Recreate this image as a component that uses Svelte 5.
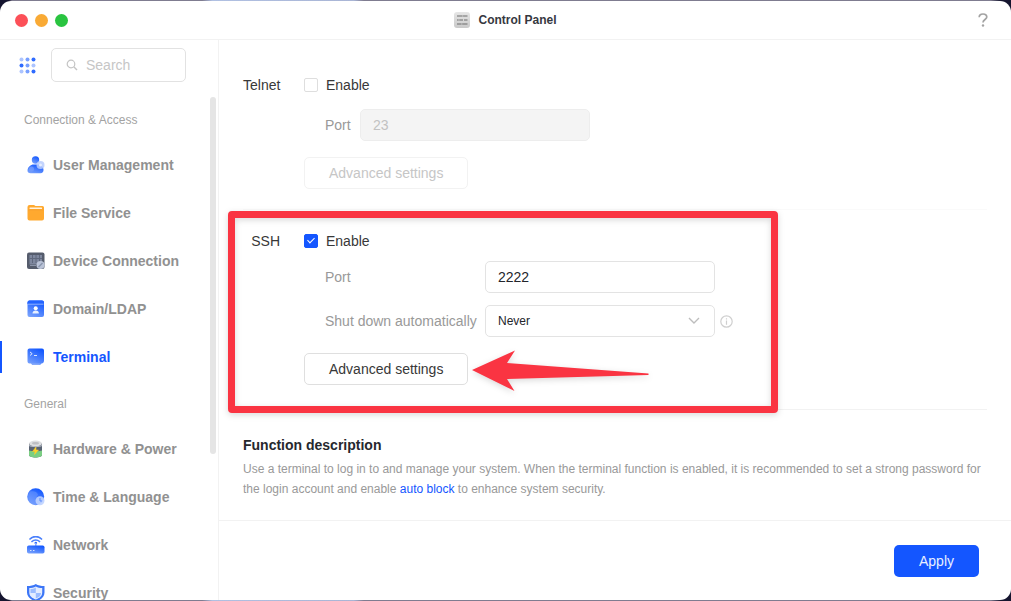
<script>
  const groups = [
    {
      title: 'Connection & Access',
      items: [
        { id: 'user', label: 'User Management' },
        { id: 'file', label: 'File Service' },
        { id: 'device', label: 'Device Connection' },
        { id: 'domain', label: 'Domain/LDAP' },
        { id: 'terminal', label: 'Terminal' }
      ]
    },
    {
      title: 'General',
      items: [
        { id: 'hardware', label: 'Hardware & Power' },
        { id: 'time', label: 'Time & Language' },
        { id: 'network', label: 'Network' },
        { id: 'security', label: 'Security' }
      ]
    }
  ];

  let active = $state('terminal');
  let search = $state('');
  let telnetEnabled = $state(false);
  let telnetPort = $state('23');
  let sshEnabled = $state(true);
  let sshPort = $state('2222');
  let shutdown = $state('never');
</script>

<svelte:head>
  <title>Control Panel</title>
</svelte:head>

{#snippet icon(id)}
  <svg class="icon" viewBox="0 0 18 18" aria-hidden="true">
    {#if id === 'user'}
      <circle cx="8.5" cy="4" r="3.7" fill="url(#blue)" />
      <path d="M0.500 14.5C0.500 11 4 8.500 6.5 8.500h4.500c3 0 5.500 2.500 5.500 5.500 0 2-1 3.200-3 3.200H3.500c-2 0-3-1-3-2.700z" fill="url(#blue)" />
      <circle cx="13.500" cy="9" r="4" fill="#b9cdfd" opacity="0.85" />
      <circle cx="13.500" cy="9" r="1.500" fill="#e6eeff" />
      <circle cx="4.500" cy="13" r="2.500" fill="#7fa4fb" opacity="0.6" />
    {:else if id === 'file'}
      <path d="M0.500 3a2 2 0 0 1 2-2H7l1.500 1h7a1.500 1.500 0 0 1 1.500 1.500v11a2 2 0 0 1-2 2H2.500a2 2 0 0 1-2-2z" fill="#ffa92f" />
      <rect x="2.500" y="3.500" width="12.500" height="1.500" rx="0.500" fill="#fff3e0" />
      <path d="M1 5.500h15.500v1H1z" fill="#f59b2b" opacity="0.5" />
    {:else if id === 'device'}
      <rect x="0" y="0.500" width="17.500" height="16.500" rx="2" fill="#555c6c" />
      <rect x="2.500" y="3" width="12.500" height="9.500" fill="#7e879e" />
      <path d="M5.500 3v8M9 3v8M12.500 3v8M2.500 6.500H15" stroke="#5f687d" stroke-width="1" />
      <path d="M3 13.500h6" stroke="#8c95aa" stroke-width="1" />
      <circle cx="13.500" cy="13" r="4" fill="#bac3d7" />
      <path d="M11.500 15l4-4" stroke="#8994ac" stroke-width="1.500" />
    {:else if id === 'domain'}
      <rect x="0.500" y="0.500" width="16.500" height="16.500" rx="2" fill="url(#blue)" />
      <path d="M0.500 4V2.500a2 2 0 0 1 2-2H15a2 2 0 0 1 2 2V4z" fill="#2464ff" />
      <path d="M1 4.200h15.500" stroke="#8db0ff" stroke-width="1" />
      <circle cx="8.700" cy="8.300" r="2" fill="#fff" />
      <path d="M5.500 13.500c0-2 1.200-3 3.200-3s3.200 1 3.200 3z" fill="#e8f0ff" />
    {:else if id === 'terminal'}
      <path d="M0.500 2.500a2 2 0 0 1 2-2H15a2 2 0 0 1 2 2v10c0 2-1 3-2.500 3L13 17H5.500L4 15.500H2.500a2 2 0 0 1-2-2z" fill="url(#blue)" />
      <path d="M3 4l2.200 1.700L3 7.500M7 7.500h3" stroke="#dce8ff" stroke-width="1" fill="none" />
      <path d="M4 15.500h9.500L12.500 17H5.500z" fill="#86aafa" />
    {:else if id === 'hardware'}
      <path d="M2 3h13v12c0 1.500-3 2.500-6.500 2.500S2 16.500 2 15z" fill="#596373" />
      <path d="M2 10.500c2 1 11 1 13 0V15c0 1.500-3 2.500-6.500 2.500S2 16.500 2 15z" fill="#7bcf82" />
      <ellipse cx="8.500" cy="3.500" rx="6.500" ry="3" fill="#dedfe1" />
      <ellipse cx="8.500" cy="3.300" rx="3.500" ry="1.200" fill="#bcbec2" />
      <path d="M2 5c2 1.500 11 1.500 13 0v1c-2 1.500-11 1.500-13 0z" fill="#b9bfc9" />
      <path d="M9 7l-3.500 4.500H8L7.500 14.500l4-4.500H9z" fill="#ffd028" stroke="#ffd028" stroke-width="0.500" />
    {:else if id === 'time'}
      <circle cx="8.700" cy="8.800" r="8.500" fill="url(#blue)" />
      <path d="M3 3.500c4-1 7 0 8 3-1 3-3 3-2 6 1 2 1 3 0 4.500A8.500 8.500 0 0 1 3 3.500z" fill="#76a0ff" opacity="0.45" />
      <circle cx="13" cy="12.800" r="4.500" fill="#bfd3ff" opacity="0.9" />
      <path d="M13 10v3h2" stroke="#5d8dfb" stroke-width="1" fill="none" />
    {:else if id === 'network'}
      <path d="M3 3c3-3.200 8.500-3.200 11.500 0M5 5.500c2-2 5.500-2 7.500 0" stroke="#4b80fb" stroke-width="1.700" fill="none" stroke-linecap="round" />
      <circle cx="8.800" cy="7" r="1.300" fill="#2d6bff" />
      <path d="M8.800 7v4" stroke="#8cafff" stroke-width="1.500" />
      <rect x="0" y="9.500" width="17.500" height="8" rx="1.800" fill="url(#blue)" />
      <path d="M3 14.500h1.500M6 14.500h1.500" stroke="#d4e2ff" stroke-width="1.200" />
    {:else}
      <path d="M8.800 0C11 1.500 14 2 17.500 2v6.500c0 4.500-3.500 7.500-8.700 9C4 16 0 13 0 8.500V2c3.500 0 6.500-0.500 8.800-2z" fill="#3c76f7" />
      <path d="M8.800 2.500c2 1 4.200 1.500 6.400 1.600v4.400c0 3.500-2.700 5.700-6.400 7-3.700-1.300-6.500-3.500-6.500-7V4.100c2.200-.1 4.500-.6 6.500-1.600z" fill="#e4edff" />
      <path d="M8.800 3.500v5.500H14c0 2.700-2 4.500-5.200 5.500V9H3.500V5c2 0 3.700-.5 5.300-1.500z" fill="#9bbcff" />
    {/if}
  </svg>
{/snippet}

<div class="desktop">
  <svg class="defs" aria-hidden="true">
    <linearGradient id="blue" x1="0.7" y1="0" x2="0.2" y2="1">
      <stop offset="0" stop-color="#1257ff" />
      <stop offset="1" stop-color="#79a2fc" />
    </linearGradient>
    <linearGradient id="metal" x1="0" y1="0" x2="0" y2="1">
      <stop offset="0" stop-color="#e6e6e6" />
      <stop offset="1" stop-color="#c9c9c9" />
    </linearGradient>
  </svg>

  <div class="window">
    <header class="titlebar">
      <div class="lights">
        <button type="button" class="light light--close" aria-label="Close"></button>
        <button type="button" class="light light--min" aria-label="Minimize"></button>
        <button type="button" class="light light--max" aria-label="Maximize"></button>
      </div>
      <h1>
        <svg class="app-icon" viewBox="0 0 16 16" aria-hidden="true">
          <rect width="16" height="16" rx="3" fill="url(#metal)" />
          <path d="M3 4h5.500M10 4h3.500M3 8h1.500M6 8h3M10 8h3.500M3 12h4.500M9 12h4.500" stroke="#6c6c6c" stroke-width="1.200" />
          <path d="M9.300 3v2M5.200 7v2M8.300 11v2" stroke="#9a9a9a" stroke-width="1" />
        </svg>
        Control Panel
      </h1>
      <button type="button" class="help" aria-label="Help">
        <svg viewBox="0 0 10 14" aria-hidden="true">
          <path d="M1.200 4.200C1.200 2 2.800 1 5 1s3.800 1.100 3.800 3c0 2.400-3.800 2.700-3.800 5.500" stroke="#a3a3a3" stroke-width="1.700" fill="none" />
          <circle cx="5" cy="12.500" r="1.200" fill="#a3a3a3" />
        </svg>
      </button>
    </header>

    <div class="body">
      <aside class="sidebar">
        <div class="sidebar__head">
          <button type="button" class="apps" aria-label="All settings">
            <svg viewBox="0 0 17 17" aria-hidden="true">
              <g fill="#2f6bff">
                <circle cx="2.500" cy="2.500" r="2" opacity="0.4" />
                <circle cx="8.500" cy="2.500" r="2" opacity="0.65" />
                <circle cx="14.500" cy="2.500" r="2" />
                <circle cx="2.500" cy="8.500" r="2" />
                <circle cx="8.500" cy="8.500" r="2" opacity="0.65" />
                <circle cx="14.500" cy="8.500" r="2" opacity="0.4" />
                <circle cx="2.500" cy="14.500" r="2" opacity="0.4" />
                <circle cx="8.500" cy="14.500" r="2" opacity="0.65" />
                <circle cx="14.500" cy="14.500" r="2" />
              </g>
            </svg>
          </button>
          <label class="search">
            <svg viewBox="0 0 12 12" aria-hidden="true">
              <circle cx="5" cy="5" r="3.800" fill="none" stroke="#c4c4c4" stroke-width="1.200" />
              <path d="M7.800 7.800L11 11" stroke="#c4c4c4" stroke-width="1.400" />
            </svg>
            <input type="text" placeholder="Search" aria-label="Search" bind:value={search} />
          </label>
        </div>

        <nav class="nav">
          {#each groups as group}
            <h2>{group.title}</h2>
            <ul>
              {#each group.items as item}
                <li>
                  <a
                    href={'#' + item.id}
                    class:active={active === item.id}
                    aria-current={active === item.id ? 'page' : undefined}
                    onclick={() => (active = item.id)}
                  >
                    {@render icon(item.id)}
                    {item.label}
                  </a>
                </li>
              {/each}
            </ul>
          {/each}
          <div class="scrollbar"></div>
        </nav>
      </aside>

      <main class="main">
        <div class="content">
          <section class="section">
            <h2 class="section__label">Telnet</h2>
            <div class="fields">
              <label class="check">
                <input type="checkbox" bind:checked={telnetEnabled} />
                Enable
              </label>
              <div class="row row--short">
                <label for="telnet-port">Port</label>
                <input id="telnet-port" class="control" type="text" bind:value={telnetPort} disabled={!telnetEnabled} />
              </div>
              <button type="button" class="button" disabled={!telnetEnabled}>Advanced settings</button>
            </div>
          </section>

          <section class="section section--ssh">
            <h2 class="section__label">SSH</h2>
            <div class="fields">
              <label class="check">
                <input type="checkbox" bind:checked={sshEnabled} />
                Enable
              </label>
              <div class="row">
                <label for="ssh-port">Port</label>
                <input id="ssh-port" class="control" type="text" bind:value={sshPort} disabled={!sshEnabled} />
              </div>
              <div class="row">
                <label for="ssh-shutdown">Shut down automatically</label>
                <div class="select">
                  <select id="ssh-shutdown" class="control" bind:value={shutdown} disabled={!sshEnabled}>
                    <option value="never">Never</option>
                    <option value="1h">1 hour</option>
                    <option value="1d">1 day</option>
                  </select>
                  <svg class="chevron" viewBox="0 0 12 8" aria-hidden="true">
                    <path d="M1 1l5 5 5-5" fill="none" stroke="#bdbdbd" stroke-width="1.400" />
                  </svg>
                </div>
                <svg class="info" viewBox="0 0 13 13" aria-hidden="true">
                  <circle cx="6.500" cy="6.500" r="5.700" fill="none" stroke="#cfcfcf" stroke-width="1.200" />
                  <path d="M6.500 3.200v1.300M6.500 5.500v4.200" stroke="#cfcfcf" stroke-width="1.200" />
                </svg>
              </div>
              <button type="button" class="button" disabled={!sshEnabled}>Advanced settings</button>
            </div>

            <div class="highlight">
              <svg class="arrow" viewBox="0 0 178 42" aria-hidden="true">
                <path d="M0 20L43 0.500 35 13l141.500 10.500v1.500L35 29l7.500 12z" fill="#fa3442" />
              </svg>
            </div>
          </section>

          <section class="about">
            <h2>Function description</h2>
            <p>
              Use a terminal to log in to and manage your system. When the terminal function is enabled, it is
              recommended to set a strong password for the login account and enable
              <a href="#auto-block">auto block</a> to enhance system security.
            </p>
          </section>
        </div>

        <footer class="footer">
          <button type="button" class="apply">Apply</button>
        </footer>
      </main>
    </div>
  </div>
</div>

<style>
  :global(body) {
    font-family: "Liberation Sans", Arial, sans-serif;
    font-size: 14px;
    color: #383838;
  }

  h1,
  h2,
  p,
  ul {
    margin: 0;
    padding: 0;
  }

  button,
  input,
  select {
    font: inherit;
    color: inherit;
    box-sizing: border-box;
  }

  svg {
    display: block;
    flex: none;
  }

  .defs {
    position: absolute;
    width: 0;
    height: 0;
  }

  .desktop {
    box-sizing: border-box;
    height: 100vh;
    padding: 1px 0;
    background: linear-gradient(90deg, #15152f 9px, #7f7c90 12px, #7f7c90 20%, #b0c0e2 21%, #a9b5d5 35%, #7f7c90 36%, #7f7c90 98%, #15152f 99%);
  }

  .window {
    display: flex;
    flex-direction: column;
    height: 100%;
    border-radius: 11px;
    overflow: hidden;
    background: #fff;
  }

  .titlebar {
    display: grid;
    grid-template-columns: 1fr auto 1fr;
    align-items: center;
    height: 38px;
    padding: 0 15px;
    border-bottom: 1px solid #f2f2f2;
  }

  .titlebar h1 {
    display: flex;
    align-items: center;
    gap: 8px;
    font-size: 12px;
    color: #36383f;
  }

  .app-icon {
    width: 16px;
    height: 16px;
  }

  .lights {
    display: flex;
    gap: 7px;
  }

  .light {
    width: 13px;
    height: 13px;
    padding: 0;
    border: none;
    border-radius: 50%;
  }

  .light--close {
    background: #fc5058;
  }

  .light--min {
    background: #f9aa35;
  }

  .light--max {
    background: #29c440;
  }

  .help {
    justify-self: end;
    padding: 0 8px;
    border: none;
    background: none;
  }

  .help svg {
    width: 10px;
    height: 14px;
  }

  .body {
    display: flex;
    flex: 1;
    min-height: 0;
  }

  .sidebar {
    display: flex;
    flex-direction: column;
    flex: none;
    width: 218px;
    border-right: 1px solid #f2f2f2;
  }

  .sidebar__head {
    display: flex;
    align-items: center;
    gap: 15px;
    padding: 8px 32px 15px 19px;
  }

  .apps {
    padding: 0;
    border: none;
    background: none;
  }

  .apps svg {
    width: 17px;
    height: 17px;
  }

  .search {
    display: flex;
    flex: 1;
    align-items: center;
    gap: 8px;
    min-width: 0;
    height: 32px;
    padding: 0 12px 0 14px;
    border: 1px solid #e2e2e2;
    border-radius: 5px;
  }

  .search svg {
    width: 12px;
    height: 12px;
  }

  .search input {
    width: 100%;
    min-width: 0;
    padding: 0;
    border: none;
    outline: none;
    background: none;
  }

  .search input::placeholder {
    color: #c6c6c6;
  }

  .nav {
    position: relative;
    flex: 1;
    min-height: 0;
    overflow: hidden;
  }

  .nav h2 {
    padding: 12px 24px 10px;
    font-size: 12px;
    font-weight: 400;
    line-height: 22px;
    color: #a3a3a3;
  }

  .nav ul {
    list-style: none;
  }

  .nav a {
    position: relative;
    display: flex;
    align-items: center;
    gap: 8px;
    height: 48px;
    padding-left: 27px;
    font-weight: 700;
    color: #919191;
    text-decoration: none;
  }

  .nav a.active {
    color: #1456ff;
  }

  .nav a.active::before {
    content: '';
    position: absolute;
    left: 0;
    top: 8px;
    bottom: 8px;
    width: 2px;
    background: #1456ff;
  }

  .icon {
    width: 18px;
    height: 18px;
  }

  .scrollbar {
    position: absolute;
    top: 0;
    right: 2px;
    width: 6px;
    height: 71%;
    border-radius: 3px;
    background: #e5e5e5;
  }

  .main {
    display: flex;
    flex: 1;
    flex-direction: column;
    min-width: 0;
  }

  .content {
    flex: 1;
    min-height: 0;
    padding: 14px 24px 0;
    overflow: hidden;
  }

  .section {
    display: grid;
    grid-template-columns: 37px 1fr;
    gap: 24px;
    padding: 19px 0 20px;
    border-bottom: 1px solid #fafafa;
  }

  .section__label {
    font-size: 14px;
    font-weight: 400;
    line-height: 24px;
    text-align: right;
  }

  .fields {
    display: flex;
    flex-direction: column;
    align-items: flex-start;
    gap: 12px;
  }

  .check {
    display: flex;
    align-items: center;
    gap: 8px;
    line-height: 24px;
  }

  .check input {
    appearance: none;
    position: relative;
    width: 14px;
    height: 14px;
    margin: 0;
    border: 1px solid #dedede;
    border-radius: 2px;
    background: #fff;
  }

  .check input:checked {
    border-color: #1456ff;
    background: #1456ff;
  }

  .check input:checked::after {
    content: '';
    position: absolute;
    left: 4px;
    top: 1px;
    width: 3px;
    height: 6px;
    border: solid #fff;
    border-width: 0 1px 1px 0;
    transform: rotate(45deg);
  }

  .row {
    display: grid;
    grid-template-columns: 160px 230px auto;
    align-items: center;
    margin-left: 21px;
    color: #999;
  }

  .row--short {
    grid-template-columns: 35px 230px;
  }

  .control {
    display: block;
    width: 100%;
    height: 32px;
    padding: 0 12px;
    border: 1px solid #e3e3e3;
    border-radius: 5px;
    background: #fff;
    color: #23252b;
  }

  .control:disabled {
    border-color: #ededed;
    background: #f4f4f4;
    color: #c2c2c2;
  }

  .select {
    position: relative;
  }

  select.control {
    appearance: none;
    font-size: 12px;
  }

  .chevron {
    position: absolute;
    top: 12px;
    right: 15px;
    width: 12px;
    height: 8px;
    pointer-events: none;
  }

  .info {
    width: 13px;
    height: 13px;
    margin-left: 5px;
  }

  .button {
    height: 32px;
    margin-top: 4px;
    padding: 0 24px;
    border: 1px solid #dfdfdf;
    border-radius: 5px;
    background: #fff;
  }

  .button:disabled {
    border-color: #f2f2f2;
    color: #c6c6c6;
  }

  .section--ssh {
    position: relative;
    padding-bottom: 24px;
    border-color: #f2f2f2;
  }

  .section--ssh .check {
    margin-bottom: -4px;
  }

  /* callout frame drawn over the SSH block */
  .highlight {
    position: absolute;
    top: 1px;
    bottom: -4px;
    left: -15px;
    width: 536px;
    border: 7px solid #fa3442;
    border-radius: 4px;
    filter: drop-shadow(0 2px 3px rgba(0, 0, 0, 0.15));
    pointer-events: none;
  }

  .arrow {
    position: absolute;
    left: 237px;
    bottom: 14px;
    width: 178px;
    height: 42px;
  }

  .about {
    padding-top: 25px;
    font-size: 12px;
    line-height: 20px;
    color: #999;
  }

  .about h2 {
    margin-bottom: 4px;
    font-size: 14px;
    color: #26282e;
  }

  .about a {
    color: #1456ff;
    text-decoration: none;
  }

  .footer {
    display: flex;
    justify-content: flex-end;
    padding: 24px 32px 23px;
    border-top: 1px solid #f2f2f2;
  }

  .apply {
    height: 32px;
    padding: 0 25px;
    border: none;
    border-radius: 5px;
    background: #1456ff;
    color: #e8efff;
  }
</style>
